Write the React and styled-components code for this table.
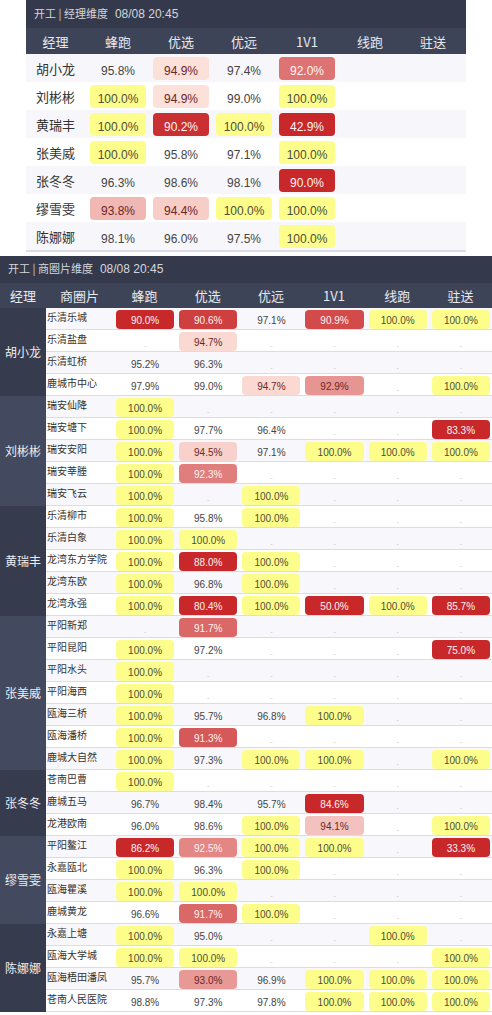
import React from "react";
import styled, { createGlobalStyle } from "styled-components";

const GlobalStyle = createGlobalStyle`
  body {
    margin: 0;
    background: #ffffff;
    font-family: "Liberation Sans", "Noto Sans CJK SC", sans-serif;
  }
`;

const COLS = ["蜂跑", "优选", "优远", "1V1", "线跑", "驻送"];

const managers = [
  { name: "胡小龙", v: [95.8, 94.9, 97.4, 92.0] },
  { name: "刘彬彬", v: [100, 94.9, 99.0, 100] },
  { name: "黄瑞丰", v: [100, 90.2, 100, 42.9] },
  { name: "张美威", v: [100, 95.8, 97.1, 100] },
  { name: "张冬冬", v: [96.3, 98.6, 98.1, 90.0] },
  { name: "缪雪雯", v: [93.8, 94.4, 100, 100] },
  { name: "陈娜娜", v: [98.1, 96.0, 97.5, 100] },
];

const _ = null;
const groups = [
  {
    name: "胡小龙",
    areas: [
      ["乐清乐城", [90.0, 90.6, 97.1, 90.9, 100, 100]],
      ["乐清盐盘", [_, 94.7, _, _, _, _]],
      ["乐清虹桥", [95.2, 96.3, _, _, _, _]],
      ["鹿城市中心", [97.9, 99.0, 94.7, 92.9, _, 100]],
    ],
  },
  {
    name: "刘彬彬",
    areas: [
      ["瑞安仙降", [100, _, _, _, _, _]],
      ["瑞安塘下", [100, 97.7, 96.4, _, _, 83.3]],
      ["瑞安安阳", [100, 94.5, 97.1, 100, 100, 100]],
      ["瑞安莘塍", [100, 92.3, _, _, _, _]],
      ["瑞安飞云", [100, _, 100, _, _, _]],
    ],
  },
  {
    name: "黄瑞丰",
    areas: [
      ["乐清柳市", [100, 95.8, 100, _, _, _]],
      ["乐清白象", [100, 100, _, _, _, _]],
      ["龙湾东方学院", [100, 88.0, 100, _, _, _]],
      ["龙湾东欧", [100, 96.8, 100, _, _, _]],
      ["龙湾永强", [100, 80.4, 100, 50.0, 100, 85.7]],
    ],
  },
  {
    name: "张美威",
    areas: [
      ["平阳新郑", [_, 91.7, _, _, _, _]],
      ["平阳昆阳", [100, 97.2, _, _, _, 75.0]],
      ["平阳水头", [100, _, _, _, _, _]],
      ["平阳海西", [100, _, _, _, _, _]],
      ["瓯海三桥", [100, 95.7, 96.8, 100, _, _]],
      ["瓯海潘桥", [100, 91.3, _, _, _, _]],
      ["鹿城大自然", [100, 97.3, 100, 100, _, 100]],
    ],
  },
  {
    name: "张冬冬",
    areas: [
      ["苍南巴曹", [100, _, _, _, _, _]],
      ["鹿城五马", [96.7, 98.4, 95.7, 84.6, _, _]],
      ["龙港欧南", [96.0, 98.6, 100, 94.1, _, 100]],
    ],
  },
  {
    name: "缪雪雯",
    areas: [
      ["平阳鳌江", [86.2, 92.5, 100, 100, _, 33.3]],
      ["永嘉瓯北", [100, 96.3, 100, _, _, _]],
      ["瓯海瞿溪", [100, 100, _, _, _, _]],
      ["鹿城黄龙", [96.6, 91.7, 100, _, _, _]],
    ],
  },
  {
    name: "陈娜娜",
    areas: [
      ["永嘉上塘", [100, 95.0, _, _, 100, _]],
      ["瓯海大学城", [100, 100, _, _, _, 100]],
      ["瓯海梧田潘凤", [95.7, 93.0, 96.9, 100, 100, 100]],
      ["苍南人民医院", [98.8, 97.3, 97.8, 100, 100, 100]],
    ],
  },
];

// red -> pale pink between 90% and 95%, yellow for full marks
function tone(v) {
  if (v >= 100) return { bg: "#fdfd8c", fg: "#4e4e36" };
  if (v >= 95) return { bg: "transparent", fg: "#444444" };
  const t = Math.min(1, Math.max(0, (v - 90) / 5));
  const mix = (a, b) => Math.round(a + (b - a) * t);
  const bg = `rgb(${mix(200, 253)}, ${mix(40, 228)}, ${mix(42, 222)})`;
  return { bg, fg: v < 92.7 ? "#fff4f4" : "#6b2626" };
}

const fmt = (v) => `${v.toFixed(1)}%`;

function Page() {
  return (
    <Wrap>
      <GlobalStyle />
      <SummaryPanel>
        <TitleBar>
          开工 | 经理维度<Stamp>08/08 20:45</Stamp>
        </TitleBar>
        <SummaryTable>
          <colgroup>
            <col style={{ width: 62 }} />
            {COLS.map((c) => (
              <col key={c} style={{ width: 63 }} />
            ))}
          </colgroup>
          <thead>
            <tr>
              <HeadCell $big>经理</HeadCell>
              {COLS.map((c) => (
                <HeadCell $big key={c}>
                  {c}
                </HeadCell>
              ))}
            </tr>
          </thead>
          <tbody>
            {managers.map((m, i) => (
              <SummaryRow key={m.name} $alt={i % 2 === 0}>
                <NameCell>{m.name}</NameCell>
                {COLS.map((c, j) => {
                  const v = m.v[j];
                  if (v === undefined) return <SummaryCell key={c} />;
                  const t = tone(v);
                  return (
                    <SummaryCell key={c}>
                      <BigPill $bg={t.bg} $fg={t.fg}>
                        {fmt(v)}
                      </BigPill>
                    </SummaryCell>
                  );
                })}
              </SummaryRow>
            ))}
          </tbody>
        </SummaryTable>
      </SummaryPanel>

      <DetailPanel>
        <TitleBar $flush>
          开工 | 商圈片维度<Stamp>08/08 20:45</Stamp>
        </TitleBar>
        <DetailTable>
          <colgroup>
            <col style={{ width: 46 }} />
            <col style={{ width: 67 }} />
            {COLS.map((c) => (
              <col key={c} />
            ))}
          </colgroup>
          <thead>
            <tr>
              <HeadCell $tight>经理</HeadCell>
              <HeadCell $tight>商圈片</HeadCell>
              {COLS.map((c) => (
                <HeadCell $tight key={c}>
                  {c}
                </HeadCell>
              ))}
            </tr>
          </thead>
          <tbody>
            {(() => {
              let idx = 0;
              return groups.flatMap((g, gi) =>
                g.areas.map(([area, vals], ai) => {
                  const alt = idx++ % 2 === 0;
                  return (
                    <DetailRow key={area} $alt={alt}>
                      {ai === 0 && (
                        <ManagerCell rowSpan={g.areas.length} $light={gi % 2 === 1}>
                          {g.name}
                        </ManagerCell>
                      )}
                      <AreaCell>{area}</AreaCell>
                      {vals.map((v, j) => {
                        if (v === null)
                          return (
                            <ValueCell key={j}>
                              <Dash>-</Dash>
                            </ValueCell>
                          );
                        const t = tone(v);
                        return (
                          <ValueCell key={j}>
                            <SmallPill $bg={t.bg} $fg={t.fg}>
                              {fmt(v)}
                            </SmallPill>
                          </ValueCell>
                        );
                      })}
                    </DetailRow>
                  );
                })
              );
            })()}
          </tbody>
        </DetailTable>
      </DetailPanel>
    </Wrap>
  );
}

const Wrap = styled.div`
  width: 492px;
  display: flex;
  flex-direction: column;
  gap: 4px;
`;

const SummaryPanel = styled.section`
  margin: 0 26px;
  width: 440px;
`;

const DetailPanel = styled.section`
  width: 492px;
`;

const TitleBar = styled.div`
  height: ${(p) => (p.$flush ? 27 : 28)}px;
  line-height: ${(p) => (p.$flush ? 25 : 26)}px;
  background: #343a4b;
  color: #d4d6dc;
  font-size: 11px;
  padding-left: 8px;
  font-family: "Noto Sans CJK SC", sans-serif;
`;

const Stamp = styled.span`
  font-family: "Liberation Sans", sans-serif;
  font-size: 12px;
  margin-left: 7px;
`;

const SummaryTable = styled.table`
  width: 440px;
  table-layout: fixed;
  border-collapse: collapse;
  border-bottom: 2px solid #dcdce6;
`;

const HeadCell = styled.th`
  height: ${(p) => (p.$big ? 26 : 25)}px;
  padding: ${(p) => (p.$big ? "0 5px 0 2px" : "0")};
  background: #3e4458;
  color: #e8e9ee;
  font-weight: normal;
  font-size: 13px;
  text-align: center;
  font-family: "Noto Sans CJK SC", sans-serif;
  white-space: nowrap;
`;

const SummaryRow = styled.tr`
  background: ${(p) => (p.$alt ? "#f7f7fb" : "#ffffff")};
`;

const NameCell = styled.td`
  height: 28px;
  padding: 0 5px 0 2px;
  text-align: center;
  font-size: 13px;
  color: #333333;
  font-family: "Noto Sans CJK SC", sans-serif;
`;

const SummaryCell = styled.td`
  height: 28px;
  padding: 3px 5px 2px 2px;
  box-sizing: border-box;
`;

const BigPill = styled.div`
  height: 23px;
  box-sizing: border-box;
  padding-top: 5px;
  line-height: 18px;
  border-radius: 4px;
  background: ${(p) => p.$bg};
  color: ${(p) => p.$fg};
  font-size: 12px;
  text-align: center;
`;

const DetailTable = styled.table`
  width: 492px;
  table-layout: fixed;
  border-collapse: collapse;
`;

const DetailRow = styled.tr`
  background: ${(p) => (p.$alt ? "#f8f8fc" : "#ffffff")};
`;

const ManagerCell = styled.td`
  background: ${(p) => (p.$light ? "#434a5f" : "#363b4e")};
  color: #eceef2;
  font-size: 12px;
  text-align: center;
  vertical-align: middle;
  padding: 0;
  font-family: "Noto Sans CJK SC", sans-serif;
`;

const AreaCell = styled.td`
  height: 21px;
  box-sizing: border-box;
  padding: 3px 0 0 1px;
  vertical-align: top;
  font-size: 10px;
  line-height: 12px;
  color: #333333;
  border-bottom: 1px solid #dcdce6;
  white-space: nowrap;
  font-family: "Noto Sans CJK SC", sans-serif;
`;

const ValueCell = styled.td`
  height: 21px;
  box-sizing: border-box;
  padding: 2px 2px 0 3px;
  vertical-align: top;
  border-bottom: 1px solid #dcdce6;
`;

const SmallPill = styled.div`
  height: 19px;
  box-sizing: border-box;
  padding-top: 2px;
  line-height: 17px;
  border-radius: 4px;
  background: ${(p) => p.$bg};
  color: ${(p) => p.$fg};
  font-size: 10px;
  text-align: center;
`;

const Dash = styled.div`
  height: 19px;
  box-sizing: border-box;
  padding-top: 10px;
  font-size: 7px;
  line-height: 7px;
  color: #c4c4c8;
  text-align: center;
`;

export default function App() {
  return <Page />;
}
